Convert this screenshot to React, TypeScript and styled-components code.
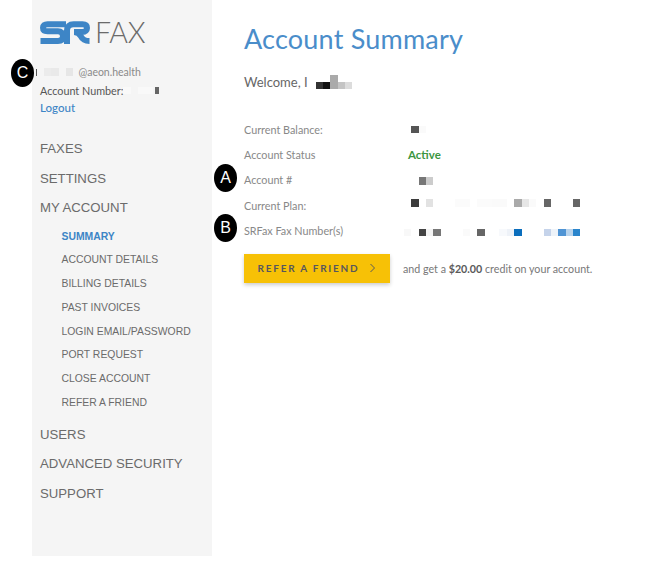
import React from "react";
import styled, { createGlobalStyle } from "styled-components";

const Global = createGlobalStyle`
  html, body { margin: 0; padding: 0; background: #fff; }
  body { font-family: "Lato", "Open Sans", sans-serif; color: #666; }
`;

const Page = styled.div`
  position: relative;
  display: flex;
  width: 670px;
  height: 574px;
  padding-left: 32px;
  box-sizing: border-box;
  overflow: hidden;
`;

const Sidebar = styled.aside`
  width: 180px;
  height: 556px;
  background: #f5f5f5;
  padding: 20px 0 0 8px;
  box-sizing: border-box;
  flex: none;
`;

const LogoRow = styled.div`
  display: flex;
  align-items: center;
  height: 25px;
  gap: 5px;
`;

const LogoText = styled.span`
  font-family: "Lato", sans-serif;
  font-weight: 300;
  font-size: 28.5px;
  letter-spacing: -0.2px;
  line-height: 25px;
  color: #6a6a6a;
`;

const UserBlock = styled.div`
  margin-top: 18px;
  display: flex;
  flex-direction: column;
`;

const UserLine = styled.div`
  display: flex;
  align-items: center;
  height: 18px;
  font-size: 10.8px;
  color: #555;
`;

const NameMark = styled.span`
  width: 1px;
  height: 7px;
  margin-left: -4px;
  margin-right: 7px;
  background: #555;
`;

const Email = styled.span`
  color: #8a8a8a;
  margin-left: 5px;
  font-size: 10.5px;
`;

const Logout = styled.a`
  display: block;
  height: 18px;
  line-height: 18px;
  font-size: 11.5px;
  font-weight: 500;
  color: #3d85c6;
`;

const NavList = styled.nav`
  margin-top: 17px;
  display: flex;
  flex-direction: column;
`;

const NavItem = styled.div`
  height: 29.5px;
  line-height: 29.5px;
  font-family: "Liberation Sans", sans-serif;
  font-size: 13.2px;
  color: #6b6b6b;
`;

const SubList = styled.div`
  display: flex;
  flex-direction: column;
  padding: 2px 0 5px 21.5px;
`;

const SubItem = styled.div<{ $active?: boolean }>`
  height: 23.75px;
  line-height: 23.75px;
  font-family: "Liberation Sans", sans-serif;
  font-size: 10.4px;
  font-weight: ${(p) => (p.$active ? 700 : 400)};
  color: ${(p) => (p.$active ? "#3d85c6" : "#6b6b6b")};
`;

const Main = styled.main`
  flex: 1;
  padding: 21px 0 0 32px;
`;

const Title = styled.h1`
  margin: 0;
  font-family: "Lato", sans-serif;
  font-weight: 400;
  font-size: 27px;
  line-height: 36px;
  color: #4a8dca;
  letter-spacing: 0.2px;
`;

const Welcome = styled.div`
  display: flex;
  align-items: center;
  height: 20px;
  margin-top: 15px;
  font-size: 13px;
  color: #666;
`;

const InfoGrid = styled.div`
  display: grid;
  grid-template-columns: 160px 1fr;
  grid-auto-rows: 25.2px;
  margin-top: 25px;
  align-items: center;
  font-size: 10.8px;
  color: #888;
`;

const ActiveText = styled.span`
  margin-left: 4px;
  font-weight: 700;
  font-size: 11.5px;
  color: #3c963f;
`;

const MosaicRow = styled.div<{ $dy: number }>`
  display: flex;
  align-items: center;
  margin-top: ${(p) => p.$dy}px;
`;

const Cell = styled.span<{ $c: string | null; $h: number; $w: number }>`
  flex: none;
  width: ${(p) => p.$w}px;
  height: ${(p) => p.$h}px;
  background: ${(p) => p.$c ?? "transparent"};
`;

const Mosaic = ({
  cells,
  h = 7.35,
  dy = 0,
}: {
  cells: (string | null)[];
  h?: number;
  dy?: number;
}) => (
  <MosaicRow $dy={dy}>
    {cells.map((c, i) => (
      <Cell key={i} $c={c} $h={h} $w={7.35} />
    ))}
  </MosaicRow>
);

const TailCell = styled.span`
  flex: none;
  width: 4px;
  height: 7px;
  margin-left: 2px;
  background: #666;
`;

const WelcomeMosaic = styled.div`
  margin-left: 8px;
  display: flex;
  align-items: flex-end;
  height: 14px;
`;

const WelcomeCell = styled.span<{ $c: string; $tall?: boolean }>`
  width: 7.35px;
  height: ${(p) => (p.$tall ? 14 : 7)}px;
  background: ${(p) => p.$c};
`;

const ReferRow = styled.div`
  display: flex;
  align-items: center;
  margin-top: 11px;
  gap: 13px;
`;

const ReferButton = styled.button`
  width: 146px;
  height: 29px;
  display: flex;
  align-items: center;
  justify-content: center;
  gap: 10px;
  background: #f7c106;
  border: none;
  padding: 0;
  box-shadow: 0 2px 4px rgba(0, 0, 0, 0.2);
  font-family: "Lato", sans-serif;
  font-weight: 700;
  font-size: 10px;
  letter-spacing: 1.75px;
  color: #56565e;
`;

const ReferNote = styled.span`
  font-size: 10.7px;
  color: #777;
  b {
    font-weight: 700;
    color: #5a5a5a;
  }
`;

const Badge = styled.div<{ $x: number; $y: number }>`
  position: absolute;
  left: ${(p) => p.$x}px;
  top: ${(p) => p.$y}px;
  width: 23px;
  height: 28px;
  border-radius: 50%;
  background: #000;
  color: #fff;
  display: flex;
  align-items: center;
  justify-content: center;
  font-family: "Liberation Sans", sans-serif;
  font-size: 16px;
`;

const Logo = () => (
  <svg width="50" height="23" viewBox="0 0 50 23" fill="none">
    <path
      d="M26 3.2H7.5C4.6 3.2 3 4.6 3 6.8S4.6 10.2 7.5 10.2H18C21.2 10.2 23 12 23 15.2S21.2 20 18 20H0.5"
      stroke="#3d85c6"
      strokeWidth="6"
    />
    <path
      d="M27 23V9.5C27 5.5 29.5 3.2 33.5 3.2H42.5C45.4 3.2 47 4.6 47 7S45.4 11 42.5 11H34C38 11 39.5 12.5 41 15.5C42.5 18.6 44.5 20 49.5 20"
      stroke="#3d85c6"
      strokeWidth="6"
    />
  </svg>
);

export default function App() {
  return (
    <Page>
      <Global />
      <Sidebar>
        <LogoRow>
          <Logo />
          <LogoText>FAX</LogoText>
        </LogoRow>
        <UserBlock>
          <UserLine>
            <NameMark />
            <Mosaic cells={["#ebebeb", "#e9e9e9", null, "#e6e6e6"]} />
            <Email>@aeon.health</Email>
          </UserLine>
          <UserLine>
            Account Number:
            <Mosaic cells={["#f9f9f9", null, "#f9f9f9", "#f9f9f9"]} h={7} />
            <TailCell />
          </UserLine>
          <Logout>Logout</Logout>
        </UserBlock>
        <NavList>
          <NavItem>FAXES</NavItem>
          <NavItem>SETTINGS</NavItem>
          <NavItem>MY ACCOUNT</NavItem>
          <SubList>
            <SubItem $active>SUMMARY</SubItem>
            <SubItem>ACCOUNT DETAILS</SubItem>
            <SubItem>BILLING DETAILS</SubItem>
            <SubItem>PAST INVOICES</SubItem>
            <SubItem>LOGIN EMAIL/PASSWORD</SubItem>
            <SubItem>PORT REQUEST</SubItem>
            <SubItem>CLOSE ACCOUNT</SubItem>
            <SubItem>REFER A FRIEND</SubItem>
          </SubList>
          <NavItem>USERS</NavItem>
          <NavItem>ADVANCED SECURITY</NavItem>
          <NavItem>SUPPORT</NavItem>
        </NavList>
      </Sidebar>
      <Main>
        <Title>Account Summary</Title>
        <Welcome>
          Welcome, I
          <WelcomeMosaic>
            <WelcomeCell $c="#333" />
            <WelcomeCell $c="#111" />
            <WelcomeCell $c="#aaa" $tall />
            <WelcomeCell $c="#c4c4c4" />
            <WelcomeCell $c="#dcdcdc" />
          </WelcomeMosaic>
        </Welcome>
        <InfoGrid>
          <span>Current Balance:</span>
          <Mosaic cells={[null, "#555", "#fafafa"]} />
          <span>Account Status</span>
          <ActiveText>Active</ActiveText>
          <span>Account #</span>
          <Mosaic cells={[null, null, "#777", "#ccc"]} dy={2} />
          <span>Current Plan:</span>
          <Mosaic
            dy={-4}
            cells={[null, "#3c3c3c", null, "#e2e2e2", null, null, null, "#fbfbfb", "#fbfbfb", null, "#fbfbfb", "#fbfbfb", "#fafafa", "#fafafa", null, "#aaa", "#e6e6e6", "#fafafa", null, "#666", null, null, null, "#666"]}
          />
          <span>SRFax Fax Number(s)</span>
          <Mosaic
            dy={4}
            cells={["#f8f8f8", null, "#444", "#f4f4f4", "#777", null, null, null, "#fafafa", null, "#666", null, null, "#f7f9fc", "#eef2f8", "#0a6ebd", null, null, null, "#c5d3ea", "#eef3f9", "#4f94d4", "#b8d3ec", "#2a85cc"]}
          />
        </InfoGrid>
        <ReferRow>
          <ReferButton>
            REFER A FRIEND
            <svg width="7" height="10" viewBox="0 0 7 10" fill="none" stroke="#5a5a5a" strokeWidth="1">
              <path d="M1.5 1l4 4-4 4" />
            </svg>
          </ReferButton>
          <ReferNote>
            and get a <b>$20.00</b> credit on your account.
          </ReferNote>
        </ReferRow>
      </Main>
      <Badge $x={214} $y={164}>A</Badge>
      <Badge $x={214} $y={214}>B</Badge>
      <Badge $x={11} $y={59}>C</Badge>
    </Page>
  );
}
